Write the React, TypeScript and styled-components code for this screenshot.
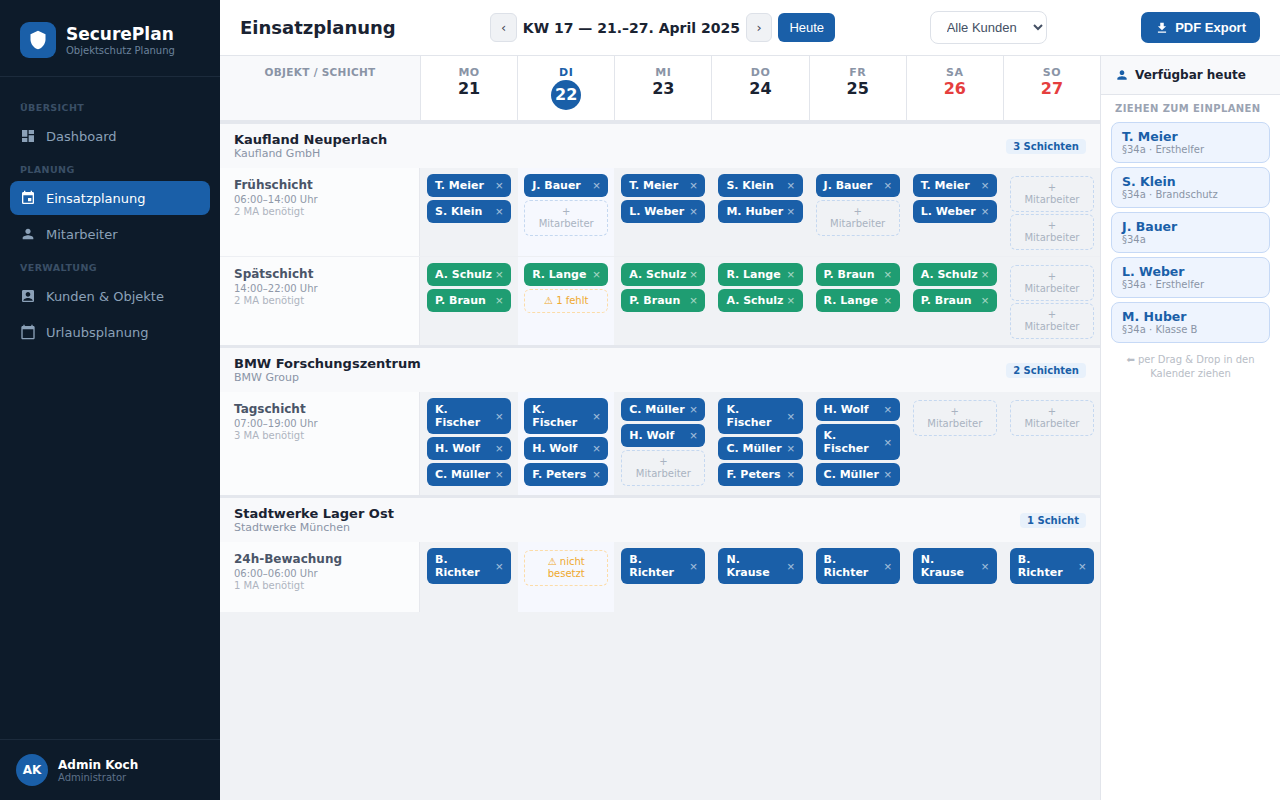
import React from "react";
import styled, { createGlobalStyle } from "styled-components";
import {
  MdDashboard,
  MdEvent,
  MdPerson,
  MdAccountBox,
  MdCalendarToday,
  MdFileDownload,
  MdShield,
} from "react-icons/md";

const Global = createGlobalStyle`
  * { box-sizing: border-box; }
  html, body { margin: 0; padding: 0; height: 100%; }
  body { font-family: "DejaVu Sans", sans-serif; background: #f0f2f5; }
`;

const Shell = styled.div`
  display: flex;
  width: 1280px;
  height: 800px;
  overflow: hidden;
`;

const Sidebar = styled.aside`
  width: 220px;
  flex: none;
  background: #0d1b2a;
  display: flex;
  flex-direction: column;
`;

const Brand = styled.div`
  display: flex;
  align-items: flex-start;
  gap: 10px;
  height: 77px;
  padding: 22px 20px 0;
  border-bottom: 1px solid #1c2b3c;
`;

const LogoMark = styled.div`
  width: 36px;
  height: 36px;
  border-radius: 9px;
  background: #1a5fa8;
  display: flex;
  align-items: center;
  justify-content: center;
  color: #fff;
  font-size: 20px;
`;

const BrandText = styled.div`
  display: flex;
  flex-direction: column;
  padding-top: 2px;
`;

const BrandName = styled.div`
  font-size: 17px;
  font-weight: 700;
  line-height: 20px;
  color: #fff;
`;

const BrandSub = styled.div`
  font-size: 10px;
  line-height: 12px;
  margin-top: 1px;
  color: #6b829b;
`;

const Nav = styled.nav`
  flex: 1;
  padding: 25px 10px 0;
  display: flex;
  flex-direction: column;
`;

const SectionLabel = styled.div<{ $first?: boolean }>`
  font-size: 9.5px;
  font-weight: 700;
  letter-spacing: 0.4px;
  line-height: 12px;
  color: #3a4f66;
  padding: 0 10px;
  margin: ${(p) => (p.$first ? "0 0 5px" : "9px 0 5px")};
`;

const NavItem = styled.a<{ $active?: boolean }>`
  display: flex;
  align-items: center;
  gap: 10px;
  height: 34px;
  padding: 0 10px;
  margin-bottom: 2px;
  border-radius: 8px;
  font-size: 13px;
  color: ${(p) => (p.$active ? "#fff" : "#8ba1b8")};
  background: ${(p) => (p.$active ? "#1a5fa8" : "transparent")};
  & > svg {
    font-size: 16px;
    flex: none;
  }
`;

const UserBar = styled.div`
  display: flex;
  align-items: center;
  gap: 10px;
  height: 61px;
  padding: 0 16px;
  border-top: 1px solid #1c2b3c;
`;

const Avatar = styled.div`
  width: 32px;
  height: 32px;
  border-radius: 50%;
  background: #1a5fa8;
  color: #fff;
  font-size: 12px;
  font-weight: 700;
  display: flex;
  align-items: center;
  justify-content: center;
`;

const UserText = styled.div`
  padding-top: 1px;
`;

const UserName = styled.div`
  font-size: 12px;
  font-weight: 700;
  line-height: 14px;
  color: #fff;
`;

const UserRole = styled.div`
  font-size: 10px;
  line-height: 12px;
  color: #5d7189;
`;

const Main = styled.main`
  flex: 1;
  min-width: 0;
  display: flex;
  flex-direction: column;
`;

const Topbar = styled.header`
  height: 56px;
  flex: none;
  background: #fff;
  border-bottom: 1px solid #e2e5eb;
  padding: 0 20px;
  display: flex;
  align-items: center;
  justify-content: space-between;
`;

const PageTitle = styled.h1`
  margin: 0;
  font-size: 18px;
  font-weight: 700;
  color: #1a2332;
`;

const WeekNav = styled.div`
  display: flex;
  align-items: center;
  gap: 6px;
`;

const ArrowButton = styled.button`
  width: 26.5px;
  height: 29px;
  padding: 0;
  border: 1px solid #dde1e8;
  border-radius: 6px;
  background: #f0f2f5;
  color: #445;
  font-family: "DejaVu Sans", sans-serif;
  font-size: 13px;
`;

const WeekLabel = styled.div`
  font-size: 14px;
  font-weight: 700;
  color: #1a2332;
`;

const TodayButton = styled.button`
  height: 29px;
  padding: 0 11px;
  border: none;
  border-radius: 6px;
  background: #1a5fa8;
  color: #fff;
  font-family: "Liberation Sans", Arial, sans-serif;
  font-size: 13px;
`;

const Select = styled.select`
  width: 117px;
  height: 33px;
  padding: 0 12px;
  border: 1px solid #dde1e8;
  border-radius: 8px;
  background: #fff;
  color: #445064;
  font-family: "Liberation Sans", Arial, sans-serif;
  font-size: 13px;
`;

const ExportButton = styled.button`
  display: flex;
  align-items: center;
  gap: 6px;
  height: 31px;
  padding: 0 14px;
  border: none;
  border-radius: 7px;
  background: #1a5fa8;
  color: #fff;
  font-family: "Liberation Sans", Arial, sans-serif;
  font-size: 13px;
  font-weight: 700;
  & > svg {
    font-size: 14px;
  }
`;

const Workspace = styled.div`
  flex: 1;
  min-height: 0;
  display: flex;
`;

const Planner = styled.div`
  flex: 1;
  min-width: 0;
  background: #f0f2f5;
`;

const gridColumns = "200px repeat(7, 1fr)";

const HeadRow = styled.div`
  display: grid;
  grid-template-columns: ${gridColumns};
  height: 68px;
  background: #fff;
  border-bottom: 4px solid #e4e7ed;
`;

const HeadCorner = styled.div`
  background: #f8f9fb;
  padding-top: 10px;
  text-align: center;
  font-size: 10.5px;
  font-weight: 700;
  letter-spacing: 0.3px;
  line-height: 13px;
  color: #8a94a6;
`;

const HeadDay = styled.div`
  border-left: 1px solid #e2e5eb;
  padding-top: 10px;
  display: flex;
  flex-direction: column;
  align-items: center;
`;

const DayName = styled.div<{ $today?: boolean }>`
  font-size: 11px;
  font-weight: 700;
  letter-spacing: 0.5px;
  line-height: 13px;
  color: ${(p) => (p.$today ? "#1a5fa8" : "#8a94a6")};
`;

const DayNumber = styled.div<{ $weekend?: boolean; $today?: boolean }>`
  font-size: 16px;
  font-weight: 700;
  line-height: 20px;
  color: ${(p) => (p.$today ? "#fff" : p.$weekend ? "#e53e3e" : "#1a2332")};
  ${(p) =>
    p.$today
      ? `width: 30px;
         height: 30px;
         margin-top: 1px;
         border-radius: 50%;
         background: #1a5fa8;
         display: flex;
         align-items: center;
         justify-content: center;`
      : ""}
`;

const Group = styled.section`
  border-bottom: 3px solid #e4e7ed;
  &:last-child {
    border-bottom: none;
  }
`;

const GroupHead = styled.div`
  height: 44px;
  background: #f8f9fb;
  padding: 0 14px;
  display: flex;
  align-items: center;
  justify-content: space-between;
`;

const GroupName = styled.div`
  font-size: 13px;
  font-weight: 700;
  line-height: 15px;
  color: #1a2332;
`;

const GroupClient = styled.div`
  font-size: 11px;
  line-height: 13px;
  color: #8a94a6;
`;

const Badge = styled.span`
  height: 15px;
  padding: 0 7px;
  border-radius: 4px;
  background: #e8f1fb;
  color: #1a5fa8;
  font-size: 10px;
  font-weight: 700;
  line-height: 15px;
`;

const ShiftRow = styled.div<{ $lined?: boolean }>`
  display: grid;
  grid-template-columns: ${gridColumns};
  min-height: 70px;
  border-bottom: ${(p) => (p.$lined ? "1px solid #edeff3" : "none")};
`;

const ShiftInfo = styled.div`
  background: #fbfcfd;
  padding: 10px 14px;
  border-right: 1px solid #e6e8ed;
`;

const ShiftName = styled.div`
  font-size: 12px;
  font-weight: 700;
  line-height: 14px;
  color: #4a5568;
  margin-bottom: 2px;
`;

const ShiftMeta = styled.div`
  font-size: 10px;
  line-height: 12px;
  color: #8f98a8;
`;

const ShiftNeed = styled(ShiftMeta)`
  color: #aeb4bf;
`;

const DayCell = styled.div<{ $today?: boolean }>`
  border-left: 1px solid #f0f2f5;
  padding: 6px;
  background: ${(p) => (p.$today ? "#f6f8fe" : "#f0f2f5")};
`;

const Chip = styled.div<{ $tone: "blue" | "green" }>`
  display: flex;
  align-items: center;
  justify-content: space-between;
  margin-bottom: 3px;
  padding: 5px 8px;
  border-radius: 6px;
  background: ${(p) => (p.$tone === "green" ? "#1f9d72" : "#1a5fa8")};
  color: #fff;
  font-size: 11px;
  font-weight: 700;
`;

const ChipRemove = styled.span`
  flex: none;
  margin-left: 2px;
  font-family: "Liberation Sans", Arial, sans-serif;
  font-size: 13px;
  font-weight: 400;
  line-height: 13px;
  opacity: 0.6;
`;

const Slot = styled.div<{ $warn?: boolean }>`
  margin-top: 2px;
  padding: 5px 9px;
  border: 1px dashed ${(p) => (p.$warn ? "#fcdca8" : "#c5d8f0")};
  border-radius: 6px;
  text-align: center;
  font-size: 10px;
  line-height: 12px;
  color: ${(p) => (p.$warn ? "#efa92e" : "#a9b3c1")};
`;

const Panel = styled.aside`
  width: 180px;
  flex: none;
  background: #fff;
  border-left: 1px solid #e2e5eb;
`;

const PanelHead = styled.div`
  height: 39px;
  padding: 0 14px;
  background: #f8f9fb;
  border-bottom: 1px solid #e2e5eb;
  display: flex;
  align-items: center;
  gap: 6px;
  font-size: 12px;
  font-weight: 700;
  color: #1a2332;
  & > svg {
    font-size: 14px;
    color: #1a5fa8;
  }
`;

const PanelBody = styled.div`
  padding: 7px 10px 0;
`;

const PanelLabel = styled.div`
  padding-left: 4px;
  font-size: 10px;
  font-weight: 700;
  letter-spacing: 0.4px;
  line-height: 13px;
  white-space: nowrap;
  color: #9aa3b2;
  margin-bottom: 7px;
`;

const StaffCard = styled.div`
  height: 41px;
  margin-bottom: 4px;
  padding: 7px 10px;
  border: 1px solid #c6d9f6;
  border-radius: 8px;
  background: #eef4fe;
`;

const StaffName = styled.div`
  font-size: 12.5px;
  font-weight: 700;
  line-height: 14px;
  color: #1a5fa8;
`;

const StaffMeta = styled.div`
  font-size: 10px;
  line-height: 12px;
  color: #8a94a6;
`;

const Hint = styled.div`
  margin-top: 10px;
  text-align: center;
  font-size: 10px;
  line-height: 14px;
  color: #b8bdc6;
`;

type Entry =
  | { kind: "chip"; name: string }
  | { kind: "add" }
  | { kind: "warn"; text: string };

const c = (name: string): Entry => ({ kind: "chip", name });
const add: Entry = { kind: "add" };
const w = (text: string): Entry => ({ kind: "warn", text });

type Shift = {
  name: string;
  time: string;
  need: string;
  tone: "blue" | "green";
  days: Entry[][];
};

type Site = { name: string; client: string; badge: string; shifts: Shift[] };

const days = [
  { label: "MO", num: "21" },
  { label: "DI", num: "22", today: true },
  { label: "MI", num: "23" },
  { label: "DO", num: "24" },
  { label: "FR", num: "25" },
  { label: "SA", num: "26", weekend: true },
  { label: "SO", num: "27", weekend: true },
];

const sites: Site[] = [
  {
    name: "Kaufland Neuperlach",
    client: "Kaufland GmbH",
    badge: "3 Schichten",
    shifts: [
      {
        name: "Frühschicht",
        time: "06:00–14:00 Uhr",
        need: "2 MA benötigt",
        tone: "blue",
        days: [
          [c("T. Meier"), c("S. Klein")],
          [c("J. Bauer"), add],
          [c("T. Meier"), c("L. Weber")],
          [c("S. Klein"), c("M. Huber")],
          [c("J. Bauer"), add],
          [c("T. Meier"), c("L. Weber")],
          [add, add],
        ],
      },
      {
        name: "Spätschicht",
        time: "14:00–22:00 Uhr",
        need: "2 MA benötigt",
        tone: "green",
        days: [
          [c("A. Schulz"), c("P. Braun")],
          [c("R. Lange"), w("⚠ 1 fehlt")],
          [c("A. Schulz"), c("P. Braun")],
          [c("R. Lange"), c("A. Schulz")],
          [c("P. Braun"), c("R. Lange")],
          [c("A. Schulz"), c("P. Braun")],
          [add, add],
        ],
      },
    ],
  },
  {
    name: "BMW Forschungszentrum",
    client: "BMW Group",
    badge: "2 Schichten",
    shifts: [
      {
        name: "Tagschicht",
        time: "07:00–19:00 Uhr",
        need: "3 MA benötigt",
        tone: "blue",
        days: [
          [c("K. Fischer"), c("H. Wolf"), c("C. Müller")],
          [c("K. Fischer"), c("H. Wolf"), c("F. Peters")],
          [c("C. Müller"), c("H. Wolf"), add],
          [c("K. Fischer"), c("C. Müller"), c("F. Peters")],
          [c("H. Wolf"), c("K. Fischer"), c("C. Müller")],
          [add],
          [add],
        ],
      },
    ],
  },
  {
    name: "Stadtwerke Lager Ost",
    client: "Stadtwerke München",
    badge: "1 Schicht",
    shifts: [
      {
        name: "24h-Bewachung",
        time: "06:00–06:00 Uhr",
        need: "1 MA benötigt",
        tone: "blue",
        days: [
          [c("B. Richter")],
          [w("⚠ nicht besetzt")],
          [c("B. Richter")],
          [c("N. Krause")],
          [c("B. Richter")],
          [c("N. Krause")],
          [c("B. Richter")],
        ],
      },
    ],
  },
];

const staff = [
  { name: "T. Meier", meta: "§34a · Ersthelfer" },
  { name: "S. Klein", meta: "§34a · Brandschutz" },
  { name: "J. Bauer", meta: "§34a" },
  { name: "L. Weber", meta: "§34a · Ersthelfer" },
  { name: "M. Huber", meta: "§34a · Klasse B" },
];

function CellEntry({ entry, tone }: { entry: Entry; tone: "blue" | "green" }) {
  if (entry.kind === "chip") {
    return (
      <Chip $tone={tone}>
        <span>{entry.name}</span>
        <ChipRemove>×</ChipRemove>
      </Chip>
    );
  }
  if (entry.kind === "warn") return <Slot $warn>{entry.text}</Slot>;
  return <Slot>+ Mitarbeiter</Slot>;
}

export default function App() {
  return (
    <Shell>
      <Global />
      <Sidebar>
        <Brand>
          <LogoMark>
            <MdShield />
          </LogoMark>
          <BrandText>
            <BrandName>SecurePlan</BrandName>
            <BrandSub>Objektschutz Planung</BrandSub>
          </BrandText>
        </Brand>
        <Nav>
          <SectionLabel $first>ÜBERSICHT</SectionLabel>
          <NavItem>
            <MdDashboard />
            Dashboard
          </NavItem>
          <SectionLabel>PLANUNG</SectionLabel>
          <NavItem $active>
            <MdEvent />
            Einsatzplanung
          </NavItem>
          <NavItem>
            <MdPerson />
            Mitarbeiter
          </NavItem>
          <SectionLabel>VERWALTUNG</SectionLabel>
          <NavItem>
            <MdAccountBox />
            Kunden &amp; Objekte
          </NavItem>
          <NavItem>
            <MdCalendarToday />
            Urlaubsplanung
          </NavItem>
        </Nav>
        <UserBar>
          <Avatar>AK</Avatar>
          <UserText>
            <UserName>Admin Koch</UserName>
            <UserRole>Administrator</UserRole>
          </UserText>
        </UserBar>
      </Sidebar>
      <Main>
        <Topbar>
          <PageTitle>Einsatzplanung</PageTitle>
          <WeekNav>
            <ArrowButton>‹</ArrowButton>
            <WeekLabel>KW 17 — 21.–27. April 2025</WeekLabel>
            <ArrowButton>›</ArrowButton>
            <TodayButton>Heute</TodayButton>
          </WeekNav>
          <Select defaultValue="Alle Kunden">
            <option>Alle Kunden</option>
          </Select>
          <ExportButton>
            <MdFileDownload />
            PDF Export
          </ExportButton>
        </Topbar>
        <Workspace>
          <Planner>
            <HeadRow>
              <HeadCorner>OBJEKT / SCHICHT</HeadCorner>
              {days.map((d) => (
                <HeadDay key={d.label}>
                  <DayName $today={d.today}>{d.label}</DayName>
                  <DayNumber $today={d.today} $weekend={d.weekend}>
                    {d.num}
                  </DayNumber>
                </HeadDay>
              ))}
            </HeadRow>
            {sites.map((site) => (
              <Group key={site.name}>
                <GroupHead>
                  <div>
                    <GroupName>{site.name}</GroupName>
                    <GroupClient>{site.client}</GroupClient>
                  </div>
                  <Badge>{site.badge}</Badge>
                </GroupHead>
                {site.shifts.map((shift, si) => (
                  <ShiftRow key={shift.name} $lined={si < site.shifts.length - 1}>
                    <ShiftInfo>
                      <ShiftName>{shift.name}</ShiftName>
                      <ShiftMeta>{shift.time}</ShiftMeta>
                      <ShiftNeed>{shift.need}</ShiftNeed>
                    </ShiftInfo>
                    {shift.days.map((entries, di) => (
                      <DayCell key={di} $today={days[di].today}>
                        {entries.map((entry, ei) => (
                          <CellEntry key={ei} entry={entry} tone={shift.tone} />
                        ))}
                      </DayCell>
                    ))}
                  </ShiftRow>
                ))}
              </Group>
            ))}
          </Planner>
          <Panel>
            <PanelHead>
              <MdPerson />
              Verfügbar heute
            </PanelHead>
            <PanelBody>
              <PanelLabel>ZIEHEN ZUM EINPLANEN</PanelLabel>
              {staff.map((s) => (
                <StaffCard key={s.name}>
                  <StaffName>{s.name}</StaffName>
                  <StaffMeta>{s.meta}</StaffMeta>
                </StaffCard>
              ))}
              <Hint>⬅ per Drag &amp; Drop in den Kalender ziehen</Hint>
            </PanelBody>
          </Panel>
        </Workspace>
      </Main>
    </Shell>
  );
}
